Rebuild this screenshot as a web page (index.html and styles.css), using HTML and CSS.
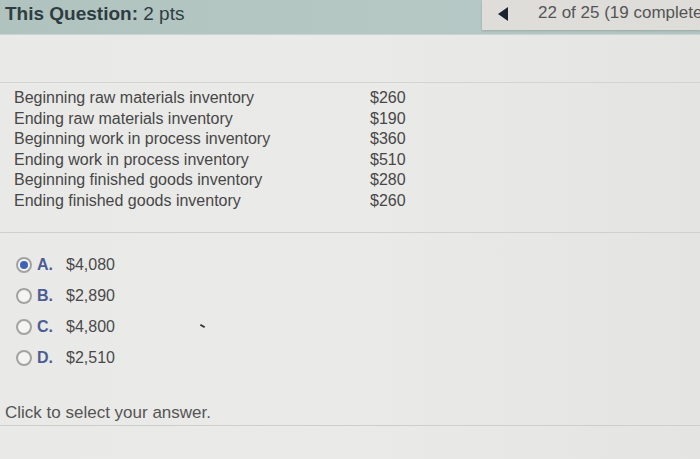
FILE: index.html
```html
<!DOCTYPE html>
<html>
<head>
<meta charset="utf-8">
<link rel="stylesheet" href="styles.css">
</head>
<body>
<div class="topbar">
  <div class="title"><b>This Question:</b> 2 pts</div>
  <div class="nav">
    <span class="tri"></span>
    <span class="count">22 of 25 (19 complete)</span>
  </div>
</div>
<div class="page">
  <div class="spacer"></div>
  <div class="question">
    <div class="table">
      <div class="row"><span class="lbl">Beginning raw materials inventory</span><span class="val">$260</span></div>
      <div class="row"><span class="lbl">Ending raw materials inventory</span><span class="val">$190</span></div>
      <div class="row"><span class="lbl">Beginning work in process inventory</span><span class="val">$360</span></div>
      <div class="row"><span class="lbl">Ending work in process inventory</span><span class="val">$510</span></div>
      <div class="row"><span class="lbl">Beginning finished goods inventory</span><span class="val">$280</span></div>
      <div class="row"><span class="lbl">Ending finished goods inventory</span><span class="val">$260</span></div>
    </div>
  </div>
  <div class="answers">
    <div class="opt"><span class="radio on"></span><span class="let">A.</span><span class="amt">$4,080</span></div>
    <div class="opt"><span class="radio"></span><span class="let">B.</span><span class="amt">$2,890</span></div>
    <div class="opt"><span class="radio"></span><span class="let">C.</span><span class="amt">$4,800</span><span class="speck"></span></div>
    <div class="opt"><span class="radio"></span><span class="let">D.</span><span class="amt">$2,510</span></div>
  </div>
  <div class="footer">Click to select your answer.</div>
</div>
</body>
</html>
```
FILE: styles.css
```css
* { box-sizing: border-box; }
html, body { margin: 0; padding: 0; }
body {
  width: 700px;
  height: 459px;
  overflow: hidden;
  font-family: "Liberation Sans", Arial, sans-serif;
  background: linear-gradient(90deg, #e9e9e7 0%, #eaeae8 50%, #e4e4e2 100%);
  color: #4a4a4a;
}
.topbar {
  height: 35px;
  background: linear-gradient(90deg, #b0c3bf 0%, #b6c8c4 60%, #b3c5c2 100%);
  display: flex;
  justify-content: space-between;
  align-items: flex-start;
  border-bottom: 1px solid #c9d3d1;
}
.title {
  padding: 3px 0 0 5px;
  font-size: 19px;
  color: #2f3d42;
  line-height: 22px;
}
.title b { font-weight: bold; }
.nav {
  width: 218px;
  height: 30px;
  background: #deddda;
  box-shadow: 0 1px 2px rgba(0,0,0,0.15);
  display: flex;
  align-items: flex-start;
  padding: 3px 0 0 16px;
  overflow: hidden;
  white-space: nowrap;
}
.tri {
  width: 0;
  height: 0;
  border-top: 7px solid transparent;
  border-bottom: 7px solid transparent;
  border-right: 10px solid #1c2430;
  margin-top: 4px;
  margin-right: 30px;
  flex: none;
}
.count {
  font-size: 17px;
  color: #555;
  line-height: 20px;
}
.spacer { height: 47px; }
.question {
  border-top: 1px solid #d4d4d2;
  padding: 5px 0 20px 14px;
  border-bottom: 1px solid #d0d0ce;
}
.row {
  display: flex;
  height: 20.6px;
  line-height: 20.6px;
  font-size: 16px;
  color: #474747;
}
.lbl { width: 356px; }
.val { width: 42px; }
.answers {
  padding: 17px 0 0 16px;
}
.opt {
  display: flex;
  align-items: center;
  height: 31px;
  font-size: 16px;
  position: relative;
}
.radio {
  width: 16px;
  height: 16px;
  border: 2px solid #a3a3a3;
  border-radius: 50%;
  background: #f4f4f2;
  margin-right: 5px;
  display: flex;
  align-items: center;
  justify-content: center;
}
.radio.on::after {
  content: "";
  width: 8px;
  height: 8px;
  border-radius: 50%;
  background: #3f62b8;
}
.let {
  font-weight: bold;
  color: #4d5d94;
  width: 29px;
}
.amt { color: #4a4a4a; }
.speck {
  position: absolute;
  left: 184px;
  top: 13px;
  width: 5px;
  height: 2px;
  background: #333;
  transform: rotate(30deg);
}
.footer {
  padding: 29px 0 2px 5px;
  font-size: 17px;
  color: #555;
  line-height: 20px;
  border-bottom: 1px solid #cfcfcd;
}
```
